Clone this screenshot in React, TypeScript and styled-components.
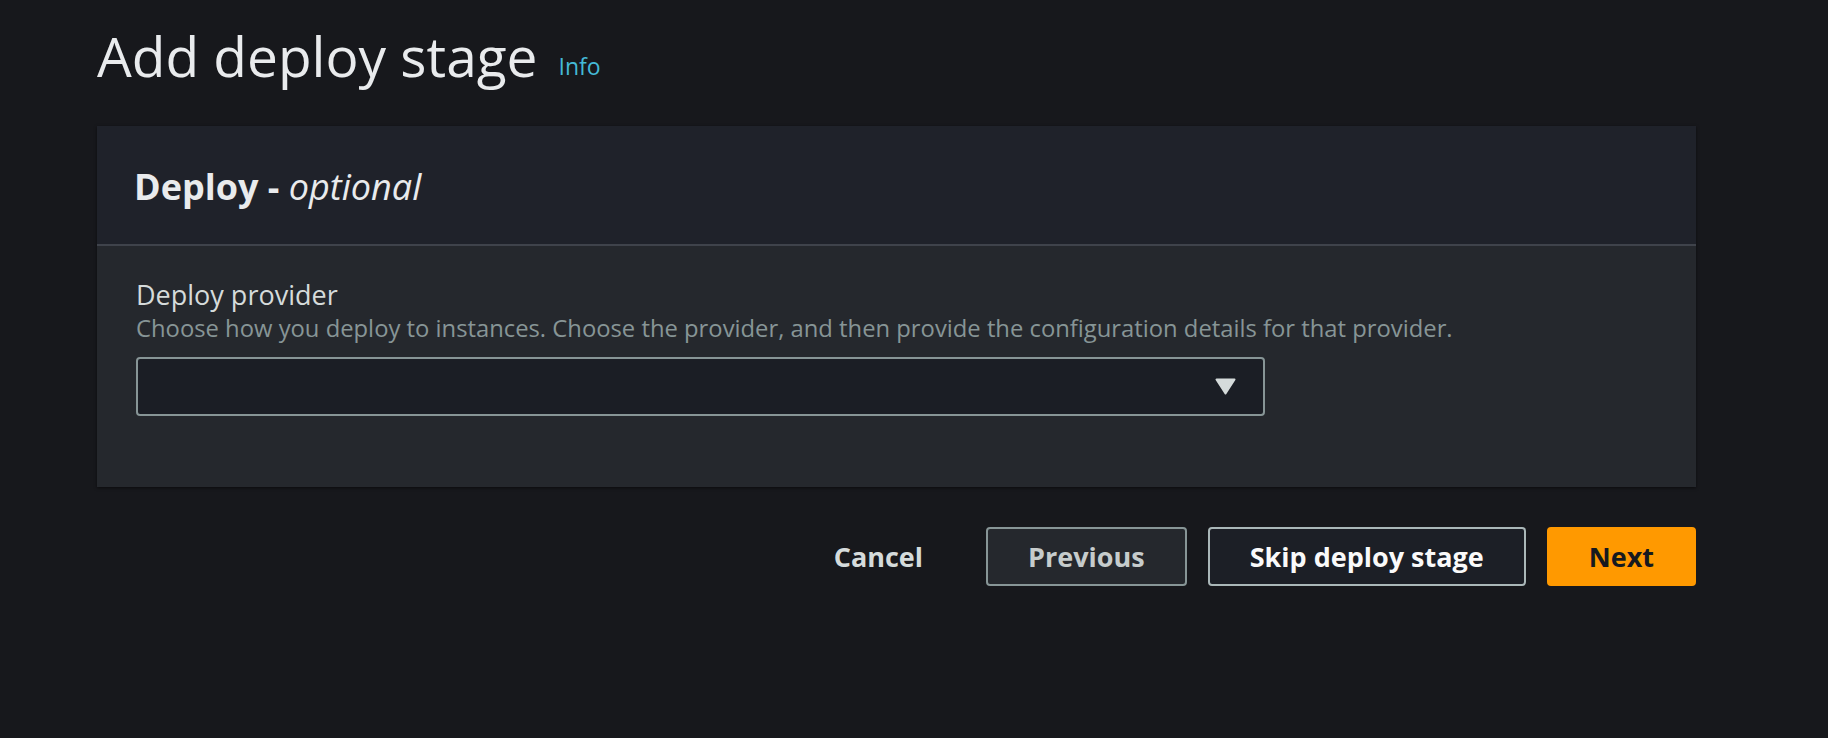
import React, { FunctionComponent } from "react";
import styled, { createGlobalStyle } from "styled-components";

const GlobalStyle = createGlobalStyle`
  html,
  body {
    margin: 0;
    padding: 0;
    background: #17181c;
    font-family: "Open Sans", "Noto Sans", sans-serif;
    color: #d5dbdb;
  }
`;

const Page = styled.div`
  width: 1599px;
  padding: 23px 0 0 97px;
  min-height: 715px;
`;

const TitleRow = styled.div`
  display: flex;
  align-items: baseline;
  gap: 21px;
  margin-bottom: 37px;
`;

const Title = styled.h1`
  margin: 0;
  font-size: 55px;
  line-height: 66px;
  font-weight: 400;
  color: #e9ebed;
`;

const InfoLink = styled.a`
  font-size: 23px;
  color: #44b9d6;
  text-decoration: none;
  position: relative;
  top: -2px;
`;

const Card = styled.section`
  background: #25282d;
  box-shadow: 0 1px 3px rgba(0, 0, 0, 0.55);
`;

const CardHeader = styled.div`
  background: #1f222a;
  border-bottom: 2px solid #3f434b;
  padding: 39px 37px 35px;
`;

const CardTitle = styled.h2`
  margin: 0;
  font-size: 36px;
  line-height: 44px;
  font-weight: 700;
  color: #e9ebed;

  em {
    font-weight: 400;
    font-style: italic;
  }
`;

const CardBody = styled.div`
  padding: 31px 39px 71px;
`;

const Label = styled.label`
  display: block;
  font-size: 27px;
  line-height: 35px;
  color: #d5dbdb;
`;

const Description = styled.div`
  margin-top: 1px;
  font-size: 23.8px;
  line-height: 31px;
  color: #879596;
`;

const SelectBox = styled.div`
  margin-top: 13px;
  width: 1129px;
  height: 59px;
  box-sizing: border-box;
  border: 2px solid #879596;
  border-radius: 4px;
  background: #1b1e25;
  display: flex;
  align-items: center;
  justify-content: flex-end;
  padding-right: 27px;
`;

const Caret = styled.svg`
  width: 21px;
  height: 17px;
  display: block;
`;

const Actions = styled.div`
  display: flex;
  justify-content: flex-end;
  gap: 21px;
  margin-top: 40px;
`;

type Variant = "link" | "normal" | "outline" | "primary";

const variantStyles: Record<Variant, string> = {
  link: "background: transparent; border-color: transparent; color: #d5dbdb;",
  normal: "background: #25282d; border-color: #879596; color: #c6cccc;",
  outline: "background: #1c1f26; border-color: #aab7b8; color: #fafafa;",
  primary: "background: #ff9900; border-color: #ff9900; color: #16191f;",
};

const Button = styled.button<{ $variant: Variant }>`
  height: 59px;
  box-sizing: border-box;
  padding: 0 40px;
  border: 2px solid;
  border-radius: 4px;
  font-family: "Open Sans", "Noto Sans", sans-serif;
  font-size: 27px;
  font-weight: 700;
  cursor: pointer;
  ${(p) => variantStyles[p.$variant]}
`;

const DeployCard: FunctionComponent = () => (
  <Card>
    <CardHeader>
      <CardTitle>
        Deploy - <em>optional</em>
      </CardTitle>
    </CardHeader>
    <CardBody>
      <Label>Deploy provider</Label>
      <Description>
        Choose how you deploy to instances. Choose the provider, and then provide the
        configuration details for that provider.
      </Description>
      <SelectBox>
        <Caret viewBox="0 0 21 17">
          <path d="M1.5 1.5 L19.5 1.5 L10.5 15.5 Z" fill="#d5dbdb" stroke="#d5dbdb" strokeWidth="2" strokeLinejoin="round" />
        </Caret>
      </SelectBox>
    </CardBody>
  </Card>
);

export default function App() {
  return (
    <>
      <GlobalStyle />
      <Page>
        <TitleRow>
          <Title>Add deploy stage</Title>
          <InfoLink href="#">Info</InfoLink>
        </TitleRow>
        <DeployCard />
        <Actions>
          <Button $variant="link">Cancel</Button>
          <Button $variant="normal">Previous</Button>
          <Button $variant="outline">Skip deploy stage</Button>
          <Button $variant="primary">Next</Button>
        </Actions>
      </Page>
    </>
  );
}
